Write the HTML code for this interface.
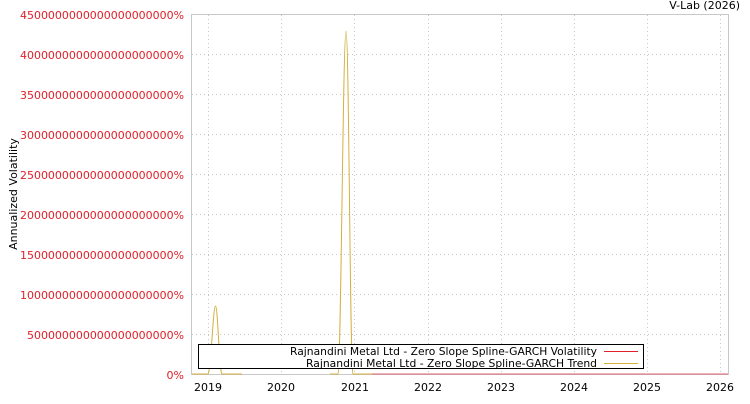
<!DOCTYPE html>
<html><head><meta charset="utf-8"><style>
body{margin:0;background:#fff;width:750px;height:400px;overflow:hidden;font-family:"DejaVu Sans","Liberation Sans",sans-serif}
</style></head><body>
<svg width="750" height="400" xmlns="http://www.w3.org/2000/svg" font-family="DejaVu Sans, Liberation Sans, sans-serif">
<rect x="191.5" y="14.5" width="537" height="360" fill="#fff" stroke="#c8c8c8"/>
<g stroke="#c8c8c8" stroke-dasharray="1,3">
<line x1="192" x2="728" y1="54.5" y2="54.5"/><line x1="192" x2="728" y1="94.5" y2="94.5"/><line x1="192" x2="728" y1="134.5" y2="134.5"/><line x1="192" x2="728" y1="174.5" y2="174.5"/><line x1="192" x2="728" y1="214.5" y2="214.5"/><line x1="192" x2="728" y1="254.5" y2="254.5"/><line x1="192" x2="728" y1="294.5" y2="294.5"/><line x1="192" x2="728" y1="334.5" y2="334.5"/>
<line y1="15" y2="374" x1="208.5" x2="208.5"/><line y1="15" y2="374" x1="281.5" x2="281.5"/><line y1="15" y2="374" x1="354.5" x2="354.5"/><line y1="15" y2="374" x1="428.5" x2="428.5"/><line y1="15" y2="374" x1="501.5" x2="501.5"/><line y1="15" y2="374" x1="574.5" x2="574.5"/><line y1="15" y2="374" x1="647.5" x2="647.5"/><line y1="15" y2="374" x1="720.5" x2="720.5"/>
</g>
<g font-size="11" fill="#e0202a" lengthAdjust="spacingAndGlyphs">
<text x="20" y="19" textLength="164" lengthAdjust="spacingAndGlyphs">4500000000000000000000%</text><text x="20" y="59" textLength="164" lengthAdjust="spacingAndGlyphs">4000000000000000000000%</text><text x="20" y="99" textLength="164" lengthAdjust="spacingAndGlyphs">3500000000000000000000%</text><text x="20" y="139" textLength="164" lengthAdjust="spacingAndGlyphs">3000000000000000000000%</text><text x="20" y="179" textLength="164" lengthAdjust="spacingAndGlyphs">2500000000000000000000%</text><text x="20" y="219" textLength="164" lengthAdjust="spacingAndGlyphs">2000000000000000000000%</text><text x="20" y="259" textLength="164" lengthAdjust="spacingAndGlyphs">1500000000000000000000%</text><text x="20" y="299" textLength="164" lengthAdjust="spacingAndGlyphs">1000000000000000000000%</text><text x="27" y="339" textLength="157" lengthAdjust="spacingAndGlyphs">500000000000000000000%</text><text x="184" y="379" text-anchor="end">0%</text>
</g>
<text transform="translate(17,194) rotate(-90)" font-size="11" text-anchor="middle" fill="#000">Annualized Volatility</text>
<text x="740" y="9" font-size="11" text-anchor="end" fill="#000">V-Lab (2026)</text>
<g font-size="11" fill="#000" text-anchor="middle">
<text x="208" y="391">2019</text><text x="281" y="391">2020</text><text x="355" y="391">2021</text><text x="428" y="391">2022</text><text x="501" y="391">2023</text><text x="574" y="391">2024</text><text x="647" y="391">2025</text><text x="720" y="391">2026</text>
</g>
<path d="M192 374 L208 374 C211 372 213 306 215.5 306 C218 306 219 372 222 374 L242 374 M330 374 L338 374 C341 372 343 31 346 31 C349 31 350 372 353 374 L372 374" fill="none" stroke="#d4b040" stroke-width="1"/>
<path d="M372 374 L728 374" stroke="#e06070" stroke-width="1"/>
<rect x="198.5" y="344.5" width="445" height="24" fill="#fff" stroke="#000"/>
<text x="290" y="355" font-size="11" textLength="307" lengthAdjust="spacingAndGlyphs">Rajnandini Metal Ltd - Zero Slope Spline-GARCH Volatility</text>
<text x="306" y="367" font-size="11" textLength="291" lengthAdjust="spacingAndGlyphs">Rajnandini Metal Ltd - Zero Slope Spline-GARCH Trend</text>
<line x1="604" x2="638" y1="351.5" y2="351.5" stroke="#e0202a"/>
<line x1="604" x2="638" y1="363.5" y2="363.5" stroke="#d4b040"/>
</svg>
</body></html>
